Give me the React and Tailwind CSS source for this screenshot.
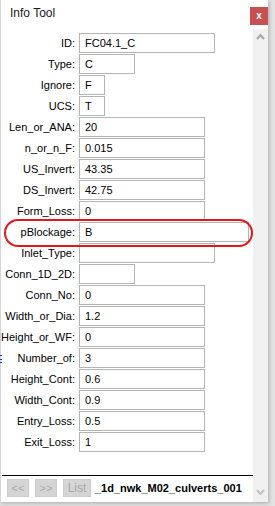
import React from "react";

const rows = [
  { label: "ID", value: "FC04.1_C", w: "w-[136px]" },
  { label: "Type", value: "C", w: "w-[56px]" },
  { label: "Ignore", value: "F", w: "w-[26px]" },
  { label: "UCS", value: "T", w: "w-[26px]" },
  { label: "Len_or_ANA", value: "20", w: "w-[126px]" },
  { label: "n_or_n_F", value: "0.015", w: "w-[126px]" },
  { label: "US_Invert", value: "43.35", w: "w-[126px]" },
  { label: "DS_Invert", value: "42.75", w: "w-[126px]" },
  { label: "Form_Loss", value: "0", w: "w-[126px]" },
  { label: "pBlockage", value: "B", w: "w-[170px]" },
  { label: "Inlet_Type", value: "", w: "w-[136px]" },
  { label: "Conn_1D_2D", value: "", w: "w-[56px]" },
  { label: "Conn_No", value: "0", w: "w-[126px]" },
  { label: "Width_or_Dia", value: "1.2", w: "w-[126px]" },
  { label: "Height_or_WF", value: "0", w: "w-[126px]" },
  { label: "Number_of", value: "3", w: "w-[126px]" },
  { label: "Height_Cont", value: "0.6", w: "w-[126px]" },
  { label: "Width_Cont", value: "0.9", w: "w-[126px]" },
  { label: "Entry_Loss", value: "0.5", w: "w-[126px]" },
  { label: "Exit_Loss", value: "1", w: "w-[126px]" },
];

export default function App() {
  return (
    <div
      className="relative w-[275px] h-[506px] bg-[#e3e3e3] overflow-hidden text-black"
      style={{ fontFamily: '"Liberation Sans", Arial, sans-serif' }}
    >
      <div className="w-[268px] h-[502px] bg-white border-l border-[#d4d4d4] flex flex-col shadow-[1px_1px_4px_rgba(0,0,0,0.25)]">
        {/* header */}
        <div className="h-[29px] flex items-start shrink-0">
          <div className="ml-[9px] mt-[6px] text-[12px] leading-[14px] text-[#1a1a1a]">Info Tool</div>
          <div className="ml-auto mt-[7px] w-[18px] h-[18px] bg-[#c75050] flex items-center justify-center text-white text-[10px] font-bold leading-none">
            x
          </div>
        </div>
        {/* body */}
        <div className="flex flex-1 min-h-0">
          <div className="w-[252px] flex flex-col">
            <div className="flex-1 pt-[4px] flex flex-col gap-[1px]">
              {rows.map((r) => (
                <div key={r.label} className="flex items-center h-[20px]">
                  <div className="w-[74px] text-right text-[11px] leading-[13px]">{r.label}:</div>
                  <div
                    className={`ml-[4px] h-[20px] border border-[#b4b4b4] flex items-center pl-[5px] text-[11px] leading-[13px] ${r.w}`}
                  >
                    {r.value}
                  </div>
                </div>
              ))}
            </div>
            <div className="h-[27px] border-t border-black flex items-start shrink-0 ml-[1px]">
              <div className="mt-[3px] ml-[5px] w-[22px] h-[18px] bg-[#d5d5d5] border border-[#cccccc] text-[#a8a8a8] text-[11px] flex items-center justify-center">
                &lt;&lt;
              </div>
              <div className="mt-[3px] ml-[6px] w-[22px] h-[18px] bg-[#d5d5d5] border border-[#cccccc] text-[#a8a8a8] text-[11px] flex items-center justify-center">
                &gt;&gt;
              </div>
              <div className="mt-[3px] ml-[6px] w-[28px] h-[18px] bg-[#d5d5d5] border border-[#cccccc] text-[#a8a8a8] text-[12px] flex items-center justify-center">
                List
              </div>
              <div className="mt-[6px] ml-[4px] text-[11px] font-bold leading-[13px] whitespace-nowrap">
                _1d_nwk_M02_culverts_001
              </div>
            </div>
          </div>
          {/* scrollbar */}
          <div className="w-[15px] bg-[#f0f0f0] flex flex-col items-center justify-between py-[4px]">
            <svg width="9" height="7" viewBox="0 0 9 7">
              <path d="M1 6 L4.5 2 L8 6" fill="none" stroke="#a6a6a6" strokeWidth="2" />
            </svg>
            <svg width="9" height="7" viewBox="0 0 9 7" className="mb-[2px]">
              <path d="M1 1 L4.5 5 L8 1" fill="none" stroke="#c2c2c2" strokeWidth="2" />
            </svg>
          </div>
        </div>
      </div>

      {/* red annotation */}
      <div className="absolute left-[4px] top-[219px] w-[249px] h-[28px] border-2 border-[#e3161c] rounded-[14px]" />

      {/* background app peek */}
      <div className="absolute left-0 top-[355px] w-[2px] h-[8px] flex flex-col justify-between">
        <div className="h-[1px] bg-[#1a3cd8]" />
        <div className="h-[1px] bg-[#1a3cd8]" />
        <div className="h-[1px] bg-[#1a3cd8]" />
      </div>
    </div>
  );
}
